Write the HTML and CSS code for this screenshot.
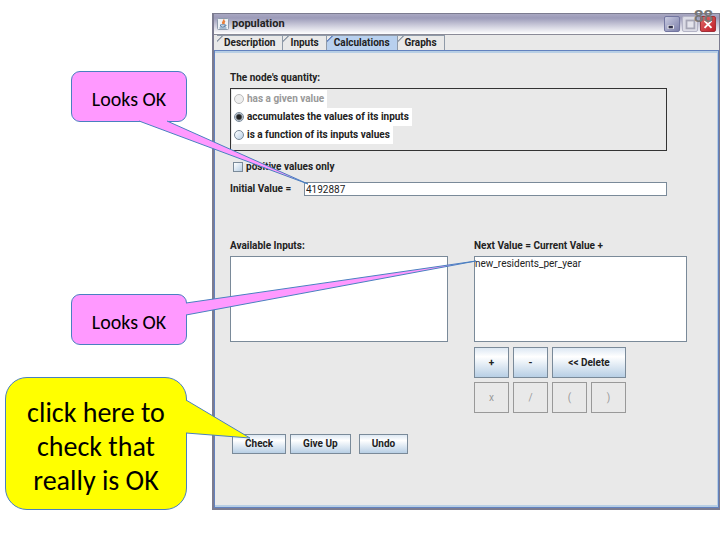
FILE: index.html
```html
<!DOCTYPE html>
<html lang="en">
<head>
<meta charset="utf-8">
<title>population</title>
<link rel="stylesheet" href="styles.css">
</head>
<body>
<main class="slide">
  <aside class="notes">
    <p class="callout pink first">Looks OK</p>
    <p class="callout pink second">Looks OK</p>
    <p class="callout yellow">click here to check that really is OK</p>
  </aside>
  <section class="window">
    <header class="titlebar">
      <svg class="java" viewBox="0 0 12 12" aria-hidden="true">
        <rect x=".5" y=".5" width="11" height="11" rx="1" fill="#edf1f5" stroke="#8e9bac"/>
        <path d="M6.500 1.500C8 3 4.500 3.500 6 6M8 3C6.500 4 7.500 4.500 6.800 6" fill="none" stroke="#e8803c" stroke-width="1.500"/>
        <path d="M3.500 6.800h4.500v1.500q-2.200 1.500-4.500 0zM8 7q2-.3.500 1.500M2.500 10h7" fill="none" stroke="#5e83a8"/>
      </svg>
      <h1>population</h1>
      <button class="winbtn" aria-label="Minimize"><svg viewBox="0 0 16 16"><path d="M3 11.500h7" stroke="#fff" stroke-width="4"/><path d="M4 11.500h5" stroke="#30304c" stroke-width="3"/></svg></button>
      <button class="winbtn max" aria-label="Maximize"><svg viewBox="0 0 16 16"><rect x="4" y="4" width="9" height="9" fill="#e4e4ec" stroke="#a6a6b6" stroke-width="2"/></svg></button>
      <button class="winbtn close" aria-label="Close"><svg viewBox="0 0 16 16"><path d="M4 4.500l8 8M12 4.500l-8 8" stroke="#fff" stroke-width="2.200"/></svg></button>
      <span class="page-number">88</span>
    </header>
    <nav class="tabs">
      <button>Description</button>
      <button>Inputs</button>
      <button class="active">Calculations</button>
      <button>Graphs</button>
    </nav>
    <form class="panel">
      <h2 id="q">The node's quantity:</h2>
      <div class="choices" role="radiogroup" aria-labelledby="q">
        <label class="off"><input type="radio" name="kind" disabled>has a given value</label>
        <label><input type="radio" name="kind" checked>accumulates the values of its inputs</label>
        <label><input type="radio" name="kind">is a function of its inputs values</label>
      </div>
      <label class="positive"><input type="checkbox">positive values only</label>
      <div class="initial">
        <label for="init">Initial Value =</label>
        <input id="init" type="text" value="4192887">
      </div>
      <div class="columns">
        <div class="available">
          <h2>Available Inputs:</h2>
          <div class="list"></div>
        </div>
        <div class="next">
          <label class="heading" for="formula">Next Value = Current Value +</label>
          <textarea class="list" id="formula" spellcheck="false">new_residents_per_year</textarea>
          <div class="keys">
            <button type="button">+</button>
            <button type="button">-</button>
            <button type="button" class="wide">&lt;&lt; Delete</button>
            <button type="button" disabled>x</button>
            <button type="button" disabled>/</button>
            <button type="button" disabled>(</button>
            <button type="button" disabled>)</button>
          </div>
        </div>
      </div>
      <div class="actions">
        <button type="button">Check</button>
        <button type="button">Give Up</button>
        <button type="button" class="undo">Undo</button>
      </div>
    </form>
  </section>
  <svg class="tails" width="720" height="540" viewBox="0 0 720 540" aria-hidden="true">
    <path class="pink-tail" d="M139 121L308 184L167 121"/>
    <path class="pink-tail" d="M186 303L476 261L186 315"/>
    <path class="yellow-tail" d="M186 400L250 438L186 433"/>
  </svg>
</main>
</body>
</html>
```
FILE: styles.css
```css
* { box-sizing: border-box; }
body {
  margin: 0;
  background: #fff;
  color: #222;
  font: bold 10px/12px Roboto, "Liberation Sans", Arial, sans-serif;
}
h1, h2, p { margin: 0; }
h2, .heading { display: block; font-size: 10px; line-height: 12px; }
button, input, textarea { font: inherit; color: inherit; margin: 0; }

.slide {
  position: relative;
  display: grid;
  grid-template-columns: 212px 1fr;
  align-items: start;
  min-height: 100vh;
}

/* Callouts */
.notes {
  display: flex;
  flex-direction: column;
  align-items: flex-end;
  padding: 71px 25px 0 5px;
}
.callout {
  display: flex;
  align-items: center;
  justify-content: center;
  border: 1px solid #4a80c0;
  color: #000;
  font-family: Carlito, Lato, sans-serif;
  font-weight: normal;
  text-align: center;
}
.pink {
  width: 116px;
  height: 51px;
  padding-top: 4px;
  border-radius: 9px;
  background: #f9f;
  font-size: 20px;
}
.second { margin-top: 172px; }
.yellow {
  width: 182px;
  height: 133px;
  margin-top: 32px;
  padding: 6px 16px 0;
  border-radius: 22px;
  background: #ff0;
  font-size: 28px;
  line-height: 34px;
}
.tails {
  position: absolute;
  top: 0;
  left: 0;
  pointer-events: none;
}
.tails path { stroke: #4a80c0; }
.pink-tail { fill: #f9f; }
.yellow-tail { fill: #ff0; }

/* Window frame */
.window {
  margin-top: 13px;
  border: solid #7c7c90;
  border-width: 1px 1px 2px 2px;
  background: #c9c9d6;
}
.titlebar {
  position: relative;
  display: flex;
  align-items: center;
  gap: 2px;
  height: 20px;
  padding: 0 3px 0 3px;
  background: linear-gradient(#a9a8c2, #9c9bb9 20%, #d5d5e2 65%, #fff);
}
.java { width: 12px; height: 12px; }
h1 { flex: 1; margin-left: 1px; font-size: 11px; line-height: 14px; }
.winbtn {
  width: 16px;
  height: 16px;
  padding: 0;
  border: 1px solid #7376a0;
  border-radius: 2px;
  background: linear-gradient(135deg, #c9cbe0, #7d80ab);
}
.winbtn svg { display: block; width: 14px; height: 14px; }
.max { border-color: #b4b4c6; background: #dcdce6; }
.close { border-color: #a03038; background: linear-gradient(135deg, #e06a68, #c01c28); }
.page-number {
  position: absolute;
  top: -6px;
  right: 6px;
  color: #777;
  font: bold 17px/18px "Liberation Sans", Arial, sans-serif;
}
.tabs {
  display: flex;
  height: 16px;
  padding: 0 0 0 3px;
  border-top: 1px solid #8b8b98;
  background: #e9e9e9;
}
.tabs button {
  padding: 0 7px;
  border: 1px solid #8f9aa8;
  border-width: 1px 1px 0 0;
  background: linear-gradient(135deg, #e9e9e9 3px, #8f9aa8 3px 4px, #e9e9e9 5px);
}
.tabs .active {
  background: linear-gradient(135deg, #e9e9e9 3px, #6382bf 3px 4px, #b8d0ee 5px);
}

/* Calculations panel */
.panel {
  display: block;
  padding: 21px 31px 53px 15px;
  border: 1px solid #6382bf;
  background: #e9e9e9;
  box-shadow: inset 0 2px #b8cfe5, inset -1px -2px #b8cfe5;
}
.choices {
  display: flex;
  flex-direction: column;
  align-items: flex-start;
  height: 63px;
  margin: 4px 20px 0 0;
  padding: 1px;
  border: 1px solid #333;
}
.choices label {
  display: flex;
  align-items: center;
  gap: 3px;
  height: 18px;
  padding: 0 3px 0 2px;
  background: #fff;
}
.choices .off, .keys button:disabled { color: #999; }
input[type="radio"], input[type="checkbox"] {
  appearance: none;
  width: 10px;
  height: 10px;
  border: 1px solid #7a8a99;
  background: linear-gradient(135deg, #fff, #b8cfe5);
}
input[type="radio"] { border-radius: 50%; }
input[type="radio"]:checked {
  background: radial-gradient(circle, #222 0 2px, #dbe6f2 4px);
}
input[type="radio"]:disabled { border-color: #bbb; background: #eee; }
.positive {
  display: flex;
  align-items: center;
  gap: 3px;
  height: 12px;
  margin: 10px 0 0 3px;
}
.initial {
  display: flex;
  align-items: center;
  height: 14px;
  margin: 9px 20px 0 0;
}
.initial label { width: 74px; }
.initial input {
  flex: 1;
  min-width: 0;
  height: 14px;
  padding: 0 1px;
  border: 1px solid #7a8a99;
  background: #fff;
  font-size: 10px;
  font-weight: normal;
}
.columns {
  display: grid;
  grid-template-columns: 218px 1fr;
  column-gap: 26px;
  margin-top: 44px;
}
.list {
  display: block;
  width: 100%;
  height: 86px;
  margin-top: 4px;
  padding: 1px 0;
  border: 1px solid #7a8a99;
  background: #fff;
  font-size: 10px;
  font-weight: normal;
  resize: none;
}
.keys {
  display: grid;
  grid-template-columns: repeat(4, 35px);
  grid-auto-rows: 31px;
  gap: 4px;
  margin-top: 5px;
}
.wide { grid-column: span 2; }
.keys button, .actions button {
  padding: 0;
  border: 1px solid #7a8a99;
  background: linear-gradient(#dde8f3, #fff 30%, #b8cfe5);
}
.keys button:disabled {
  border-color: #999;
  background: #e9e9e9;
  font-weight: normal;
}
.actions {
  display: flex;
  gap: 4px;
  margin: 21px 0 0 2px;
}
.actions button { height: 20px; padding: 0 12px; }
.actions .undo { margin-left: 4px; }
```
